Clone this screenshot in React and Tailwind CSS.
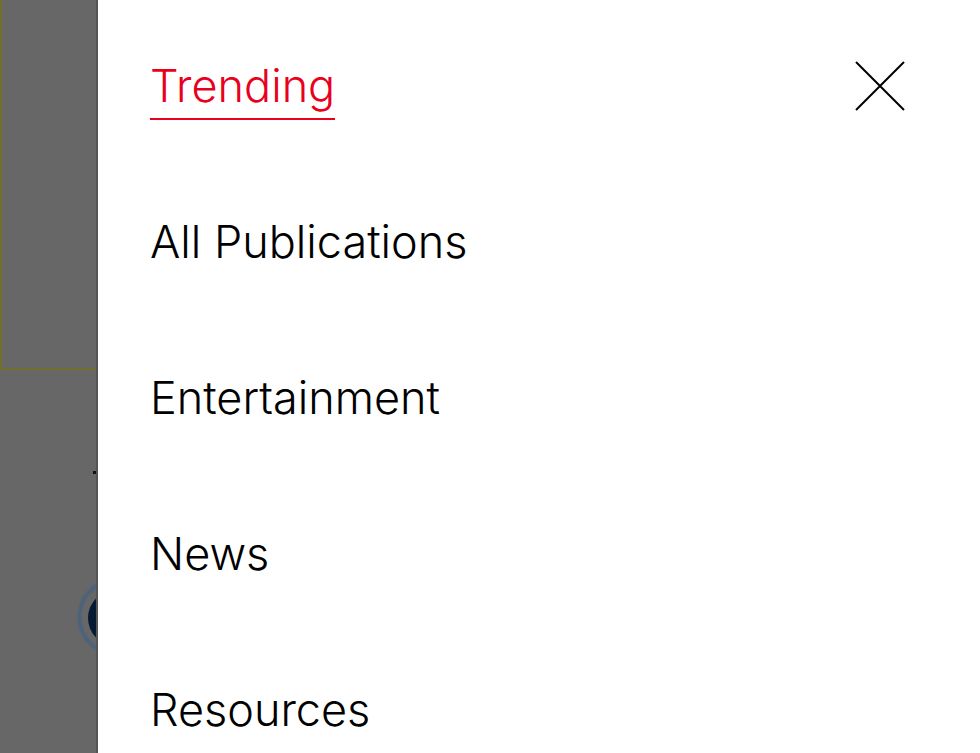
export default function App() {
  const items = ["All Publications", "Entertainment", "News", "Resources"];
  return (
    <div className="flex w-[980px] h-[753px] overflow-hidden" style={{ fontFamily: "Inter, 'Noto Sans', sans-serif" }}>
      <div className="relative w-[98px] shrink-0 overflow-hidden bg-[#676767]">
        <div className="absolute left-0 top-[-2px] w-[110px] h-[372px] border-l-2 border-b-2 border-[#70702e]" />
        <div className="absolute left-[93px] top-[471px] w-[5px] h-[3px] bg-[#111]" />
        <div className="absolute left-[78px] top-[578px] w-[80px] h-[78px] rounded-full border-[3px] border-[#3b5f8a] opacity-80 blur-[1px]" />
        <div className="absolute left-[88px] top-[590px] w-[60px] h-[56px] rounded-full bg-[#061a33]" />
        <div className="absolute right-0 top-0 w-[2px] h-full bg-[#555]" />
      </div>
      <div className="flex-1 bg-white pl-[52px] pr-[75px] pt-[58px] flex flex-col">
        <div className="h-[156px] shrink-0 flex justify-between items-start">
          <span className="inline-block text-[45px] font-[350] leading-[56px] text-[#e8001c] border-b-2 border-[#e8001c] pb-[4px]">Trending</span>
          <button className="mt-[3px] w-[50px] h-[50px]">
            <svg viewBox="0 0 50 50" width="50" height="50" fill="none" stroke="#000" strokeWidth="2">
              <path d="M1 1 L49 49 M49 1 L1 49" />
            </svg>
          </button>
        </div>
        {items.map((t) => (
          <div key={t} className="h-[156px] shrink-0 text-[45px] font-[350] leading-[56px] text-[#000]">{t}</div>
        ))}
      </div>
    </div>
  );
}
